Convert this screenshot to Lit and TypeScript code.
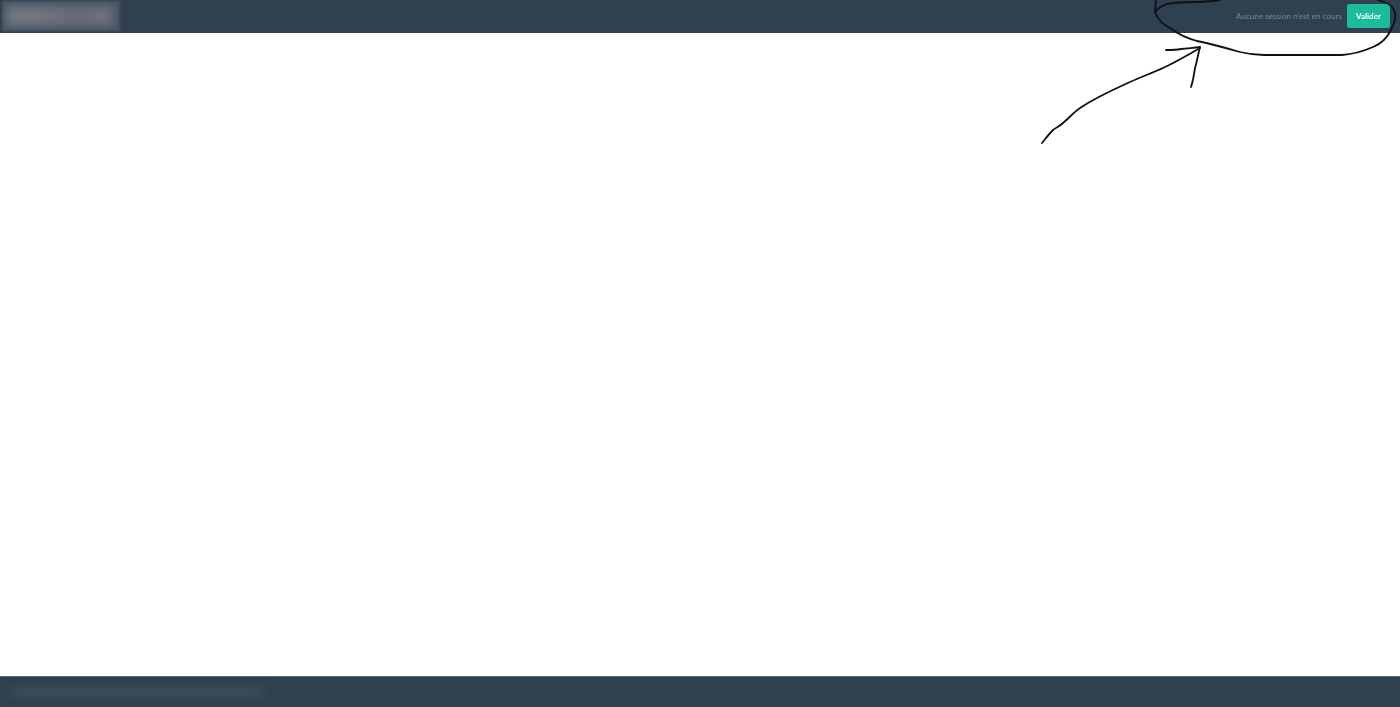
import { LitElement, html, css, svg } from "lit";
import { customElement } from "lit/decorators.js";

@customElement("app-root")
export class AppRoot extends LitElement {
  static styles = css`
    :host {
      display: flex;
      flex-direction: column;
      height: 707px;
      position: relative;
      overflow: hidden;
      background: #fff;
      font-family: Lato, "Open Sans", sans-serif;
    }
    .top {
      height: 33px;
      background: #2f4050;
      display: flex;
      align-items: center;
      justify-content: space-between;
      padding: 0 10px 1px 2px;
      box-sizing: border-box;
    }
    .logo {
      width: 118px;
      height: 30px;
      overflow: hidden;
      background: #465462;
      display: flex;
      align-items: center;
      padding: 0 5px;
      box-sizing: border-box;
      filter: blur(0.8px);
    }
    .logo-blur {
      width: 106px;
      height: 20px;
      background: linear-gradient(90deg, #767b82, #6d737b 45%, #646b74 65%, #70757d);
      filter: blur(5px);
    }
    .session {
      display: flex;
      align-items: center;
      gap: 5px;
    }
    .status {
      color: #7c8791;
      font-size: 8.1px;
      filter: blur(0.3px);
    }
    .btn {
      width: 43px;
      height: 24px;
      padding: 0;
      border: none;
      border-radius: 2px;
      background: #1abc9c;
      color: #fff;
      font: 700 8.1px Lato, sans-serif;
    }
    .btn span {
      display: inline-block;
      filter: blur(0.3px);
    }
    .main {
      flex: 1;
    }
    .foot {
      height: 31px;
      background: #2f4050;
      border-top: 1px solid #56626e;
      box-sizing: border-box;
      display: flex;
      align-items: center;
      padding-left: 12px;
    }
    .foot-blur {
      width: 250px;
      height: 10px;
      background: #404d5b;
      filter: blur(5px);
    }
    .ink {
      position: absolute;
      inset: 0;
      width: 1400px;
      height: 707px;
      pointer-events: none;
      filter: blur(0.3px);
    }
    .ink path {
      fill: none;
      stroke: #111;
      stroke-width: 1.8;
      stroke-linecap: round;
      stroke-linejoin: round;
    }
  `;

  render() {
    return html`
      <header class="top">
        <div class="logo"><div class="logo-blur"></div></div>
        <div class="session">
          <span class="status">Aucune session n'est en cours</span>
          <button class="btn"><span>Valider</span></button>
        </div>
      </header>
      <main class="main"></main>
      <footer class="foot"><div class="foot-blur"></div></footer>
      <svg class="ink" viewBox="0 0 1400 707">
        ${svg`<path d="M1156 0 L1155 12 C1157 18 1162 24 1170 28 C1178 34 1186 38 1197 41 C1212 44 1226 48 1240 52 C1248 54 1256 55 1264 55 L1305 55 L1342 55 C1354 54 1364 51 1373 47 C1381 44 1387 38 1391 30 C1394 24 1396 18 1395 13 C1394 8 1390 4 1384 2 L1378 0"/>`}
        ${svg`<path d="M1155 12 C1158 8 1162 6 1167 4 C1177 2 1186 2 1196 2 C1204 2 1212 1 1220 0"/>`}
        ${svg`<path d="M1042 143 C1046 138 1049 134 1053 130 C1057 127 1060 126 1063 123 C1069 118 1074 112 1080 108 C1086 104 1091 101 1097 98 C1108 92 1119 87 1130 82 C1141 77 1152 73 1163 68 C1176 62 1188 55 1200 48"/>`}
        ${svg`<path d="M1166 50 C1172 50 1176 50 1181 49 C1188 48 1194 48 1200 47 C1198 55 1197 61 1195 68 C1194 75 1193 81 1191 87"/>`}
      </svg>
    `;
  }
}
